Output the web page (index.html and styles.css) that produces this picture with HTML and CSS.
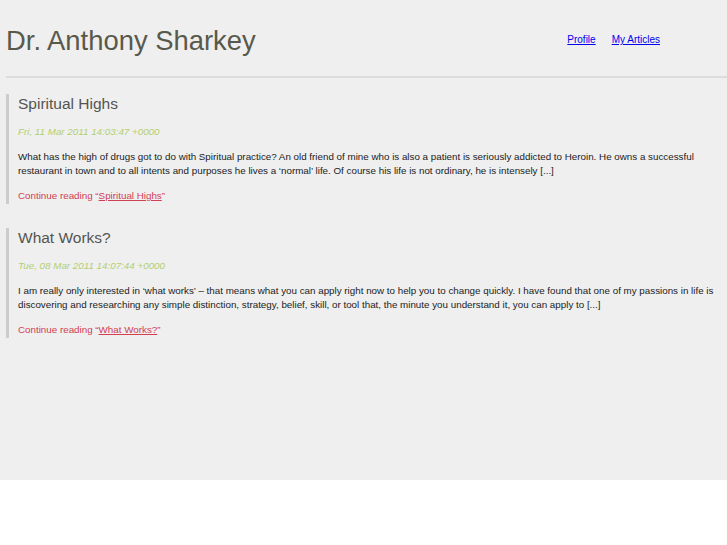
FILE: index.html
```html
<!DOCTYPE html>
<html>
<head>
<meta charset="utf-8">
<title>Dr. Anthony Sharkey</title>
<link rel="stylesheet" href="styles.css">
</head>
<body>
<div class="page">
  <header class="header">
    <h1 class="site-title">Dr. Anthony Sharkey</h1>
    <nav class="nav">
      <a href="#">Profile</a>
      <a href="#">My Articles</a>
    </nav>
  </header>
  <div class="posts">
    <article class="post">
      <h2 class="post-title">Spiritual Highs</h2>
      <p class="post-date">Fri, 11 Mar 2011 14:03:47 +0000</p>
      <p class="post-body">What has the high of drugs got to do with Spiritual practice? An old friend of mine who is also a patient is seriously addicted to Heroin. He owns a successful restaurant in town and to all intents and purposes he lives a ‘normal’ life. Of course his life is not ordinary, he is intensely [...]</p>
      <p class="post-more">Continue reading “<a href="#">Spiritual Highs</a>”</p>
    </article>
    <article class="post">
      <h2 class="post-title">What Works?</h2>
      <p class="post-date">Tue, 08 Mar 2011 14:07:44 +0000</p>
      <p class="post-body">I am really only interested in ‘what works’ – that means what you can apply right now to help you to change quickly. I have found that one of my passions in life is discovering and researching any simple distinction, strategy, belief, skill, or tool that, the minute you understand it, you can apply to [...]</p>
      <p class="post-more">Continue reading “<a href="#">What Works?</a>”</p>
    </article>
  </div>
</div>
</body>
</html>
```
FILE: styles.css
```css
html, body {
  margin: 0;
  padding: 0;
  background: #ffffff;
}
body {
  font-family: "Liberation Sans", Arial, sans-serif;
  font-size: 9.8px;
  line-height: 14px;
  color: #222;
}
.page {
  background: #efefef;
  height: 480px;
  padding-left: 6px;
  box-sizing: border-box;
}
.header {
  display: flex;
  align-items: flex-start;
  padding-top: 25px;
  padding-bottom: 19px;
  border-bottom: 2px solid #dcdcdc;
}
.site-title {
  margin: 0;
  font-weight: normal;
  font-size: 27.4px;
  line-height: 32px;
  color: #59594b;
}
.nav {
  margin-left: auto;
  margin-right: 67px;
  padding-top: 8px;
  display: flex;
  gap: 16px;
  font-size: 10px;
  line-height: 14px;
}
.nav a {
  color: #0000ee;
  text-decoration: underline;
}
.posts {
  padding-top: 16px;
  display: flex;
  flex-direction: column;
  gap: 24px;
}
.post {
  border-left: 3px solid #cccccc;
  padding-left: 9px;
  padding-bottom: 1px;
}
.post-title {
  margin: 0;
  font-weight: normal;
  font-size: 15.5px;
  line-height: 20px;
  color: #555550;
}
.post-date {
  margin: 11px 0 0;
  font-style: italic;
  color: #b2d06f;
}
.post-body {
  margin: 11px 0 0;
  color: #222;
}
.post-more {
  margin: 11px 0 0;
  color: #d2404f;
}
.post-more a {
  color: #d2404f;
}
```
